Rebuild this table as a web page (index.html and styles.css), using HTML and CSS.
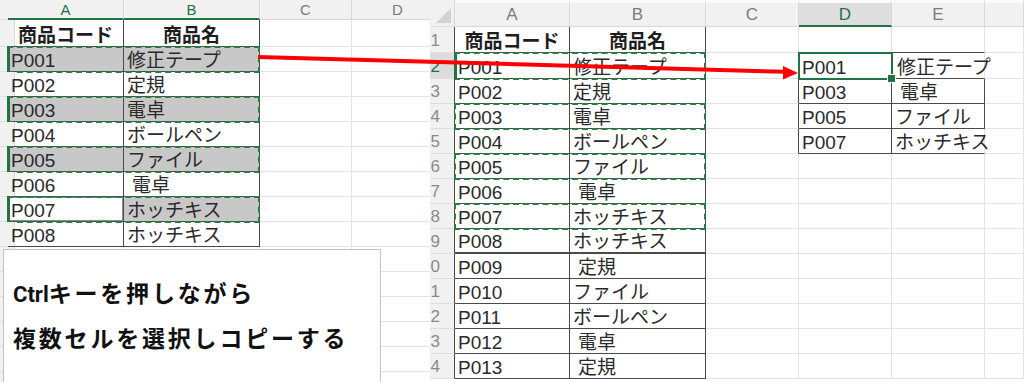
FILE: index.html
```
<!DOCTYPE html>
<html lang="ja">
<head>
<meta charset="utf-8">
<title>Ctrlキーで複数セルをコピー</title>
<link rel="stylesheet" href="styles.css">
</head>
<body>
<div class="canvas">

  <div class="sheet left">
    <div class="row hdr"><div class="rh"></div><div class="ch on">A</div><div class="ch on">B</div><div class="ch">C</div><div class="ch">D</div></div>
    <div class="row r1"><div class="rh"></div><div class="th tb tr">商品コード</div><div class="th t">商品名</div><div></div><div></div></div>
    <div class="row"><div class="rh"></div><div class="t g">P001</div><div class="t g">修正テープ</div><div></div><div></div><div class="sel solid"></div></div>
    <div class="row"><div class="rh"></div><div class="t">P002</div><div class="t">定規</div><div></div><div></div></div>
    <div class="row"><div class="rh"></div><div class="t g">P003</div><div class="t g">電卓</div><div></div><div></div><div class="sel solid"></div></div>
    <div class="row"><div class="rh"></div><div class="t">P004</div><div class="t">ボールペン</div><div></div><div></div></div>
    <div class="row"><div class="rh"></div><div class="t g">P005</div><div class="t g">ファイル</div><div></div><div></div><div class="sel solid"></div></div>
    <div class="row"><div class="rh"></div><div class="t">P006</div><div class="t ind">電卓</div><div></div><div></div></div>
    <div class="row"><div class="rh"></div><div class="t w">P007</div><div class="t g">ホッチキス</div><div></div><div></div><div class="sel solid"></div></div>
    <div class="row"><div class="rh"></div><div class="t">P008</div><div class="t">ホッチキス</div><div></div><div></div></div>
    <div class="row"><div class="rh"></div><div></div><div></div><div></div><div></div></div>
    <div class="row"><div class="rh"></div><div></div><div></div><div></div><div></div></div>
    <div class="row"><div class="rh"></div><div></div><div></div><div></div><div></div></div>
    <div class="row"><div class="rh"></div><div></div><div></div><div></div><div></div></div>
    <div class="row"><div class="rh"></div><div></div><div></div><div></div><div></div></div>
    <div class="row"><div class="rh"></div><div></div><div></div><div></div><div></div></div>
  </div>

  <div class="note">
    <p><span class="en">Ctrl</span>キーを押しながら</p>
    <p>複数セルを選択しコピーする</p>
  </div>

  <div class="sheet mid">
    <div class="row hdr"><div class="rh corner"></div><div class="ch">A</div><div class="ch">B</div><div class="ch">C</div><div class="ch act">D</div><div class="ch">E</div><div class="ch"></div></div>
    <div class="row r1"><div class="rh tr">1</div><div class="th t">商品コード</div><div class="th t">商品名</div><div></div><div class="tb"></div><div class="tb"></div><div></div></div>
    <div class="row r2"><div class="rh on tr">2</div><div class="t">P001</div><div class="t">修正テープ</div><div class="tr"></div><div class="t">P001</div><div class="tb ind2">修正テープ</div><div></div><div class="sel solid"></div><div class="cur"></div></div>
    <div class="row"><div class="rh tr">3</div><div class="t">P002</div><div class="t">定規</div><div class="tr"></div><div class="t">P003</div><div class="t ind">電卓</div><div></div></div>
    <div class="row"><div class="rh tr">4</div><div class="t">P003</div><div class="t">電卓</div><div class="tr"></div><div class="t">P005</div><div class="t">ファイル</div><div></div><div class="sel"></div></div>
    <div class="row"><div class="rh tr">5</div><div class="t">P004</div><div class="t">ボールペン</div><div class="tr"></div><div class="t">P007</div><div class="tb">ホッチキス</div><div></div></div>
    <div class="row"><div class="rh tr">6</div><div class="t">P005</div><div class="t">ファイル</div><div></div><div></div><div></div><div></div><div class="sel"></div></div>
    <div class="row"><div class="rh tr">7</div><div class="t">P006</div><div class="t ind">電卓</div><div></div><div></div><div></div><div></div></div>
    <div class="row"><div class="rh tr">8</div><div class="t">P007</div><div class="t">ホッチキス</div><div></div><div></div><div></div><div></div><div class="sel"></div></div>
    <div class="row"><div class="rh tr">9</div><div class="t b2">P008</div><div class="t b2">ホッチキス</div><div></div><div></div><div></div><div></div></div>
    <div class="row"><div class="rh tr">0</div><div class="t">P009</div><div class="t ind">定規</div><div></div><div></div><div></div><div></div></div>
    <div class="row"><div class="rh tr">1</div><div class="t">P010</div><div class="t">ファイル</div><div></div><div></div><div></div><div></div></div>
    <div class="row"><div class="rh tr">2</div><div class="t">P011</div><div class="t">ボールペン</div><div></div><div></div><div></div><div></div></div>
    <div class="row"><div class="rh tr">3</div><div class="t">P012</div><div class="t ind">電卓</div><div></div><div></div><div></div><div></div></div>
    <div class="row"><div class="rh tr">4</div><div class="t">P013</div><div class="t ind">定規</div><div></div><div></div><div></div><div></div></div>
  </div>

  <svg class="arrow" width="1024" height="382" viewBox="0 0 1024 382" aria-hidden="true">
    <line x1="258" y1="57" x2="786" y2="71.8" stroke="#ff0000" stroke-width="4"/>
    <polygon points="798,73 783,66 783,79.5" fill="#ff0000"/>
  </svg>

</div>
</body>
</html>
```

FILE: styles.css
```
* { box-sizing: border-box; }
html, body { margin: 0; padding: 0; background: #fff; }

.canvas {
  position: relative;
  width: 1024px;
  height: 382px;
  overflow: hidden;
  background: #fff;
}

.sheet {
  font-family: "Liberation Sans", "Noto Sans CJK JP", sans-serif;
  color: #2a2a2a;
  background: #fff;
}

.row {
  display: grid;
  grid-template-rows: 1fr;
  height: 25px;
}

.row > * {
  grid-row: 1;
  min-width: 0;
  display: flex;
  align-items: flex-end;
  white-space: nowrap;
  font-size: 19px;
  line-height: 17px;
  padding: 0 0 2px 3px;
  border-right: 1px solid #e3e3e3;
  border-bottom: 1px solid #e3e3e3;
}

.row > :nth-child(1) { grid-column: 1; }
.row > :nth-child(2) { grid-column: 2; }
.row > :nth-child(3) { grid-column: 3; }
.row > :nth-child(4) { grid-column: 4; }
.row > :nth-child(5) { grid-column: 5; }
.row > :nth-child(6) { grid-column: 6; }
.row > :nth-child(7) { grid-column: 7; }

/* left sheet */
.left { width: 444px; }
.left .row { grid-template-columns: 8px 116px 136px 92px 92px; }
.left .hdr { height: 20px; }
.left .r1 { height: 27px; }
.left .row > .ch { font-size: 15px; }

/* middle sheet */
.mid {
  position: absolute;
  left: 430px;
  top: 0;
  width: 594px;
  height: 382px;
  overflow: hidden;
}
.mid .row { grid-template-columns: 25px 115px 136px 93px 93px 93px 39px; }
.mid .hdr { height: 27px; }
.mid .r1, .mid .r2 { height: 26px; }

/* headers */
.row > .ch {
  justify-content: center;
  align-items: center;
  padding: 0;
  line-height: 1;
  font-size: 17px;
  color: #7b7b7b;
  background: #f1f1f1;
  border-right-color: #d8d8d8;
  border-bottom-color: #d8d8d8;
}
.mid .row > .ch { border-top: 3px solid #fafafa; }
.row > .ch.on { color: #217346; border-bottom: 2px solid #217346; }
.row > .ch.act { color: #217346; background: #dedede; border-bottom: 2px solid #217346; }

.row > .rh {
  background: #f1f1f1;
  justify-content: flex-end;
  padding: 0 14px 3px 0;
  overflow: hidden;
  font-size: 17px;
  color: #8a8a8a;
  border-right-color: #d8d8d8;
  border-bottom-color: #dedede;
}
.row > .rh.on { background: #dcdcdc; color: #217346; }

.corner { position: relative; }
.corner::after {
  content: "";
  position: absolute;
  right: 3px;
  bottom: 3px;
  border-style: solid;
  border-width: 0 0 15px 15px;
  border-color: transparent transparent #d2d2d2 transparent;
}

/* table cells */
.row > .th {
  justify-content: center;
  padding-left: 0;
  font-weight: bold;
  color: #1e1e1e;
}
.row > .t { border-right-color: #4a4a4a; border-bottom-color: #4a4a4a; }
.row > .tr { border-right-color: #4a4a4a; }
.row > .tb { border-bottom-color: #4a4a4a; }
.row > .b2 { border-bottom-width: 2px; }
.row > .ind { padding-left: 8px; }
.row > .ind2 { padding-left: 5px; }
.row > .g { background: #c8c8c8; }
.row > .w { background: #fff; box-shadow: inset 0 0 0 1px #8c8c8c; }

/* marching-ants copy selection */
.row > div.sel {
  grid-column: 2 / 4;
  margin: -1px 0 -1px -1px;
  padding: 0;
  border: 2px dashed #2a7a44;
  background: transparent;
}
.row > div.sel.solid { border-left: 3px solid #217346; }

/* active cell D2 */
.row > div.cur {
  grid-column: 5;
  position: relative;
  margin: -1px;
  padding: 0;
  border: 2px solid #217346;
  background: transparent;
}
.cur::after {
  content: "";
  position: absolute;
  right: -5px;
  bottom: -5px;
  width: 7px;
  height: 7px;
  background: #217346;
  border: 1px solid #fff;
}

/* callout */
.note {
  position: absolute;
  left: 3px;
  top: 249px;
  width: 378px;
  height: 140px;
  background: #fff;
  border: 1px solid #c4c4c4;
  padding: 21px 0 0 9px;
  font-family: "Noto Sans CJK JP", sans-serif;
  font-weight: bold;
  font-size: 23px;
  letter-spacing: 2.8px;
  color: #111;
}
.note p { margin: 0; line-height: 43px; white-space: nowrap; }
.note .en { font-family: Roboto, "Liberation Sans", sans-serif; font-size: 22px; letter-spacing: 0; }

.arrow {
  position: absolute;
  left: 0;
  top: 0;
  pointer-events: none;
}
```
